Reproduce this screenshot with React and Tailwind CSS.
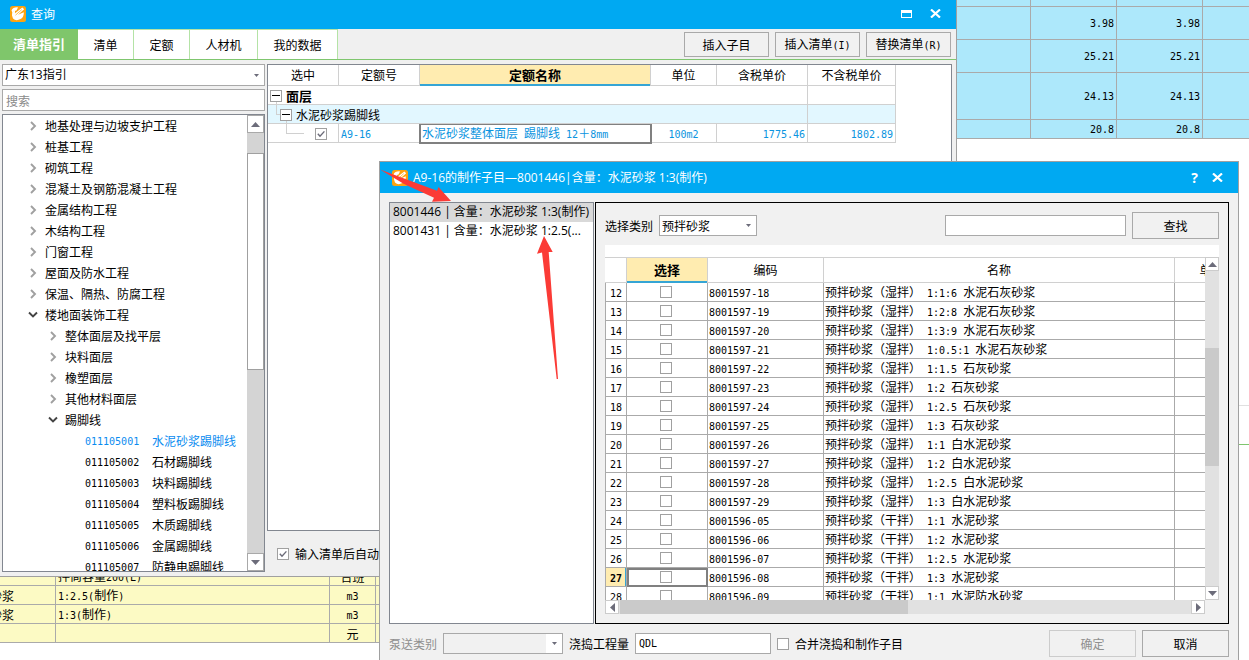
import { useState } from "react";

const priceRows = [
  { height: "h-[7px]", value: "" },
  { height: "h-[33px]", value: "3.98" },
  { height: "h-[33px]", value: "25.21" },
  { height: "h-[47px]", value: "24.13" },
  { height: "h-[19px]", value: "20.8" },
];

const materialRows = [
  { name: "", spec: "拌筒容量200(L)", unit: "台班" },
  { name: "水泥砂浆", spec: "1:2.5(制作)", unit: "m3" },
  { name: "水泥砂浆", spec: "1:3(制作)", unit: "m3" },
  { name: "", spec: "", unit: "元" },
];

const tabs = [
  { name: "清单指引", width: "w-[78px]" },
  { name: "清单", width: "w-14" },
  { name: "定额", width: "w-14" },
  { name: "人材机", width: "w-[68px]" },
  { name: "我的数据", width: "w-20" },
];

const treeItems = [
  { level: 0, name: "地基处理与边坡支护工程" },
  { level: 0, name: "桩基工程" },
  { level: 0, name: "砌筑工程" },
  { level: 0, name: "混凝土及钢筋混凝土工程" },
  { level: 0, name: "金属结构工程" },
  { level: 0, name: "木结构工程" },
  { level: 0, name: "门窗工程" },
  { level: 0, name: "屋面及防水工程" },
  { level: 0, name: "保温、隔热、防腐工程" },
  { level: 0, name: "楼地面装饰工程", open: true },
  { level: 1, name: "整体面层及找平层" },
  { level: 1, name: "块料面层" },
  { level: 1, name: "橡塑面层" },
  { level: 1, name: "其他材料面层" },
  { level: 1, name: "踢脚线", open: true },
  { level: 2, code: "011105001", name: "水泥砂浆踢脚线" },
  { level: 2, code: "011105002", name: "石材踢脚线" },
  { level: 2, code: "011105003", name: "块料踢脚线" },
  { level: 2, code: "011105004", name: "塑料板踢脚线" },
  { level: 2, code: "011105005", name: "木质踢脚线" },
  { level: 2, code: "011105006", name: "金属踢脚线" },
  { level: 2, code: "011105007", name: "防静电踢脚线" },
];

const mortarRows = [
  { no: 12, code: "8001597-18", name: "预拌砂浆（湿拌） 1:1:6 水泥石灰砂浆" },
  { no: 13, code: "8001597-19", name: "预拌砂浆（湿拌） 1:2:8 水泥石灰砂浆" },
  { no: 14, code: "8001597-20", name: "预拌砂浆（湿拌） 1:3:9 水泥石灰砂浆" },
  { no: 15, code: "8001597-21", name: "预拌砂浆（湿拌） 1:0.5:1 水泥石灰砂浆" },
  { no: 16, code: "8001597-22", name: "预拌砂浆（湿拌） 1:1.5 石灰砂浆" },
  { no: 17, code: "8001597-23", name: "预拌砂浆（湿拌） 1:2 石灰砂浆" },
  { no: 18, code: "8001597-24", name: "预拌砂浆（湿拌） 1:2.5 石灰砂浆" },
  { no: 19, code: "8001597-25", name: "预拌砂浆（湿拌） 1:3 石灰砂浆" },
  { no: 20, code: "8001597-26", name: "预拌砂浆（湿拌） 1:1 白水泥砂浆" },
  { no: 21, code: "8001597-27", name: "预拌砂浆（湿拌） 1:2 白水泥砂浆" },
  { no: 22, code: "8001597-28", name: "预拌砂浆（湿拌） 1:2.5 白水泥砂浆" },
  { no: 23, code: "8001597-29", name: "预拌砂浆（湿拌） 1:3 白水泥砂浆" },
  { no: 24, code: "8001596-05", name: "预拌砂浆（干拌） 1:1 水泥砂浆" },
  { no: 25, code: "8001596-06", name: "预拌砂浆（干拌） 1:2 水泥砂浆" },
  { no: 26, code: "8001596-07", name: "预拌砂浆（干拌） 1:2.5 水泥砂浆" },
  { no: 27, code: "8001596-08", name: "预拌砂浆（干拌） 1:3 水泥砂浆" },
  { no: 28, code: "8001596-09", name: "预拌砂浆（干拌） 1:1 水泥防水砂浆" },
];

// Latin runs are set in a half-width monospace next to full-width Chinese
const Mixed = ({ children }) =>
  String(children)
    .split(/([\x20-\x7e]+)/)
    .filter(Boolean)
    .map((part, i) =>
      /^[\x20-\x7e]/.test(part) ? (
        <span
          key={i}
          className="whitespace-pre font-['DejaVu_Sans_Mono',monospace] text-[10px]"
        >
          {part}
        </span>
      ) : (
        part
      )
    );

const Logo = () => (
  <svg className="h-4 w-4 shrink-0" viewBox="0 0 16 16">
    <rect width="16" height="16" rx="2.5" fill="#fca311" />
    <path d="M1.5 4.5Q3 1 8 1.4L6.5 4.5Q3.5 4.5 2.5 7Z" fill="#fff" />
    <path
      d="M2 9.5Q1.6 5.5 5 4.8L5 7.2L12.3 1.4L14.2 3.2L8 8.8L13.8 6.2Q14.2 11 10.5 13Q6 15.6 3 12.4Z"
      fill="#fff"
    />
    <path d="M5.5 9.2L11.8 3.6" stroke="#fca311" strokeWidth="0.7" />
  </svg>
);

const CloseIcon = () => (
  <svg className="h-[9px] w-[11px]" viewBox="0 0 11 9" fill="none">
    <path d="M1 0.5L10 8.5M10 0.5L1 8.5" stroke="#fff" strokeWidth="2.2" />
  </svg>
);

const Checkbox = ({ id, checked = false, label }) => {
  const [on, setOn] = useState(checked);
  return (
    <span className="relative inline-flex h-3 w-3 shrink-0">
      <input
        id={id}
        type="checkbox"
        aria-label={label}
        checked={on}
        onChange={() => setOn(!on)}
        className="h-3 w-3 appearance-none border border-[#a0a0a0] bg-white"
      />
      {on && (
        <svg
          className="pointer-events-none absolute inset-0 h-3 w-3"
          viewBox="0 0 12 12"
          fill="none"
        >
          <path d="M2.8 5.8L5 8.2L9.4 3.4" stroke="#6b6b78" strokeWidth="1.4" />
        </svg>
      )}
    </span>
  );
};

const Triangle = ({ dir, className = "" }) => {
  const points = {
    up: "0,5 4.5,0 9,5",
    down: "0,0 9,0 4.5,5",
    left: "5,0 5,9 0,4.5",
    right: "0,0 5,4.5 0,9",
  };
  const box = dir === "up" || dir === "down" ? "0 0 9 5" : "0 0 5 9";
  return (
    <svg className={className} viewBox={box} fill="#6c6c7a">
      <polygon points={points[dir]} />
    </svg>
  );
};

const Select = ({ id, value, label, disabled, className }) => (
  <span className={`relative flex border border-[#a9a9a9] ${className}`}>
    <select
      id={id}
      aria-label={label}
      disabled={disabled}
      defaultValue={value}
      className="w-full appearance-none bg-transparent px-[2px] text-xs leading-4 text-black outline-none"
    >
      <option>{value}</option>
    </select>
    <span
      className={`pointer-events-none absolute inset-y-0 right-0 flex w-4 items-center justify-center ${
        disabled ? "bg-white" : ""
      }`}
    >
      <Triangle dir="down" className="h-[3px] w-[5px]" />
    </span>
  </span>
);

const Button = ({ children, className = "", disabled }) => (
  <button
    disabled={disabled}
    className={`border border-[#a9a9a9] bg-[#f1f1f1] text-xs leading-4 text-black disabled:border-[#cccccc] disabled:text-[#8f8f8f] ${className}`}
  >
    <Mixed>{children}</Mixed>
  </button>
);

const TreeChevron = ({ open }) =>
  open ? (
    <svg className="h-2 w-3" viewBox="0 0 12 8" fill="none">
      <path d="M2 1.5L6 5.5L10 1.5" stroke="#444" strokeWidth="1.9" />
    </svg>
  ) : (
    <svg className="h-3 w-3" viewBox="0 0 12 12" fill="none">
      <path d="M4 2L8 6L4 10" stroke="#a0a0a0" strokeWidth="1.9" />
    </svg>
  );

const Expander = () => (
  <button
    aria-label="收起"
    className="relative z-10 flex h-3 w-3 items-center justify-center border border-[#a0a0a0] bg-white"
  >
    <span className="h-px w-2 bg-black" />
  </button>
);

const PriceTable = () => (
  <table className="w-full table-fixed border-separate border-spacing-0 bg-[#ade8fb] text-xs leading-[14px]">
    <colgroup>
      <col className="w-[74px]" />
      <col className="w-[86px]" />
      <col className="w-[86px]" />
      <col />
    </colgroup>
    <tbody>
      {priceRows.map((row, i) => (
        <tr key={i}>
          <td className={`${row.height} border-r border-b border-[#aaaaaa] p-0`} />
          <td className="border-r border-b border-[#aaaaaa] p-0 pr-[2px] text-right">
            <Mixed>{row.value}</Mixed>
          </td>
          <td className="border-r border-b border-[#aaaaaa] p-0 pr-[2px] text-right">
            <Mixed>{row.value}</Mixed>
          </td>
          <td className="border-b border-[#aaaaaa] p-0" />
        </tr>
      ))}
    </tbody>
  </table>
);

const MaterialTable = () => (
  <table className="w-full table-fixed border-separate border-spacing-0 bg-[#fcfac4] text-xs leading-[14px]">
    <colgroup>
      <col className="w-[92px]" />
      <col className="w-[274px]" />
      <col className="w-[46px]" />
      <col />
    </colgroup>
    <tbody className="[&_td]:h-[19px] [&_td]:border-b [&_td]:border-[#aaaaaa] [&_td]:p-0 [&_td]:pt-[2px]">
      {materialRows.map((row, i) => (
        <tr key={i}>
          <td className="border-r">
            <div className="pl-[2px]">{row.name}</div>
          </td>
          <td className="border-r">
            <div className="pl-[2px]">
              <Mixed>{row.spec}</Mixed>
            </div>
          </td>
          <td className="border-r text-center">
            <Mixed>{row.unit}</Mixed>
          </td>
          <td />
        </tr>
      ))}
    </tbody>
  </table>
);

const GuideTree = () => (
  <div className="flex min-h-0 flex-1 border border-[#828790] bg-white">
    <ul className="min-w-0 flex-1 overflow-hidden">
      {treeItems.map((item) => (
        <li
          key={item.name}
          className={`flex h-[21px] items-center whitespace-nowrap ${
            ["pl-6", "pl-11", "pl-[82px]"][item.level]
          } ${item.code === "011105001" ? "text-[#0a8cf0]" : ""}`}
        >
          {item.code ? (
            <span className="w-[67px]">
              <Mixed>{item.code}</Mixed>
            </span>
          ) : (
            <span className="mr-[6px] flex w-3 justify-center">
              <TreeChevron open={item.open} />
            </span>
          )}
          <span>{item.name}</span>
        </li>
      ))}
    </ul>
    <div className="flex w-[17px] flex-col bg-[#d4d4d4]">
      <div className="flex h-[18px] items-center justify-center border border-[#a9a9a9] bg-white">
        <Triangle dir="up" className="h-[5px] w-[9px]" />
      </div>
      <div className="mt-5 h-[217px] border border-[#a0a0a0] bg-white" />
      <div className="mt-auto flex h-[18px] items-center justify-center border border-[#a9a9a9] bg-white">
        <Triangle dir="down" className="h-[5px] w-[9px]" />
      </div>
    </div>
  </div>
);

const QuotaTable = () => (
  <table className="w-[628px] table-fixed border-separate border-spacing-0 text-xs leading-[14px]">
    <colgroup>
      <col className="w-[71px]" />
      <col className="w-[81px]" />
      <col className="w-[231px]" />
      <col className="w-[66px]" />
      <col className="w-[91px]" />
      <col className="w-[88px]" />
    </colgroup>
    <thead>
      <tr className="h-[21px] [&>th]:border-r [&>th]:border-b [&>th]:border-[#d0d0d0] [&>th]:p-0 [&>th]:font-normal">
        <th>选中</th>
        <th>定额号</th>
        <th className="bg-[#ffecb0]">
          <div className="-mb-px border-b-2 border-[#35a5d5] pt-px text-[13px] leading-[18px] font-bold">
            定额名称
          </div>
        </th>
        <th>单位</th>
        <th>含税单价</th>
        <th>不含税单价</th>
      </tr>
    </thead>
    <tbody className="[&_td]:h-[19px] [&_td]:border-r [&_td]:border-b [&_td]:border-[#d0d0d0] [&_td]:p-0 [&_td]:pt-px">
      <tr>
        <td colSpan={5}>
          <div className="flex items-center gap-1 pl-[2px] text-[13px] font-bold">
            <Expander />
            面层
          </div>
        </td>
        <td />
      </tr>
      <tr className="bg-[#e2f7ff]">
        <td colSpan={5} className="relative">
          <span className="absolute -top-1 left-2 h-[14px] w-1 border-b border-l border-[#d0d0d0]" />
          <div className="flex items-center gap-1 pl-3">
            <Expander />
            水泥砂浆踢脚线
          </div>
        </td>
        <td />
      </tr>
      <tr className="text-[#0a94e0]">
        <td className="relative">
          <span className="absolute -top-1 left-[18px] h-[14px] w-[18px] border-b border-l border-[#d0d0d0]" />
          <div className="flex pl-[47px]">
            <Checkbox checked label="A9-16" />
          </div>
        </td>
        <td>
          <div className="pl-[2px]">
            <Mixed>A9-16</Mixed>
          </div>
        </td>
        <td className="outline-2 -outline-offset-1 outline-[#808080]">
          <div className="pl-[2px] whitespace-nowrap">
            <Mixed>水泥砂浆整体面层 踢脚线 12＋8mm</Mixed>
          </div>
        </td>
        <td className="text-center">
          <Mixed>100m2</Mixed>
        </td>
        <td className="text-right">
          <div className="pr-[2px]">
            <Mixed>1775.46</Mixed>
          </div>
        </td>
        <td className="text-right">
          <div className="pr-[2px]">
            <Mixed>1802.89</Mixed>
          </div>
        </td>
      </tr>
    </tbody>
  </table>
);

const QueryWindow = () => {
  const [tab, setTab] = useState("清单指引");

  return (
    <section className="absolute inset-0 right-[292px] bottom-[83px] flex flex-col border-r border-b border-[#a0a0a0] bg-[#f0f0f0]">
      {/* Title bar */}
      <header className="flex h-[29px] shrink-0 items-center bg-[#00a9f2] pr-[15px] pb-[2px] pl-[10px] text-white">
        <Logo />
        <h1 className="ml-[5px] flex-1 text-xs">查询</h1>
        <button aria-label="最大化" className="mr-[18px]">
          <svg className="h-[8px] w-[11px]" viewBox="0 0 11 8">
            <path d="M0 0H11V8H0ZM1 3V7H10V3Z" fill="#fff" fillRule="evenodd" />
          </svg>
        </button>
        <button aria-label="关闭">
          <CloseIcon />
        </button>
      </header>

      {/* Tabs and actions */}
      <div className="flex h-[31px] shrink-0 items-stretch border-b border-[#7fc66e]">
        {tabs.map((t) => (
          <button
            key={t.name}
            onClick={() => setTab(t.name)}
            className={`${t.width} ${
              tab === t.name
                ? "bg-[#7fc66b] text-[13px] font-bold text-white"
                : "border-t border-r border-[#b4e3a6] bg-white text-xs"
            }`}
          >
            {t.name}
          </button>
        ))}
        <div className="ml-auto flex gap-[6px] pt-[3px] pr-[5px]">
          <Button className="h-[25px] w-[85px]">插入子目</Button>
          <Button className="h-[25px] w-[85px]">插入清单(I)</Button>
          <Button className="h-[25px] w-[85px]">替换清单(R)</Button>
        </div>
      </div>

      <div className="flex min-h-0 flex-1 gap-[2px] pt-1 pr-1 pl-[2px]">
        {/* Left: guide tree */}
        <div className="flex w-[263px] shrink-0 flex-col gap-[3px] pb-1 text-xs">
          <Select
            label="清单指引"
            value="广东13指引"
            className="h-[22px] bg-white font-['Open_Sans','Noto_Sans_CJK_SC',sans-serif]"
          />
          <input
            aria-label="搜索"
            placeholder="搜索"
            className="h-[22px] border border-[#a9a9a9] bg-white px-[3px] text-xs outline-none placeholder:text-[#8a8a8a]"
          />
          <GuideTree />
        </div>

        {/* Right: quota items */}
        <div className="flex min-w-0 flex-1 flex-col">
          <div className="min-h-0 flex-1 overflow-hidden border border-[#828790] bg-white">
            <QuotaTable />
          </div>
          <div className="flex h-[45px] items-center gap-[6px] pl-[10px] text-xs">
            <Checkbox id="auto" checked />
            <label htmlFor="auto">输入清单后自动关闭</label>
          </div>
        </div>
      </div>
    </section>
  );
};

const MortarTable = () => (
  <table className="w-[644px] table-fixed border-separate border-spacing-0 text-xs leading-[14px]">
    <colgroup>
      <col className="w-[22px]" />
      <col className="w-[81px]" />
      <col className="w-[116px]" />
      <col className="w-[351px]" />
      <col className="w-[74px]" />
    </colgroup>
    <thead>
      <tr className="h-[26px] [&>th]:border-y [&>th]:border-r [&>th]:border-[#d0d0d0] [&>th]:p-0 [&>th]:font-normal">
        <th />
        <th className="bg-[#ffecb0]">
          <div className="-mb-px border-b-2 border-[#35a5d5] text-[13px] leading-[23px] font-bold">
            选择
          </div>
        </th>
        <th>编码</th>
        <th>名称</th>
        <th>单位</th>
      </tr>
    </thead>
    <tbody className="[&_td]:h-[19px] [&_td]:border-r [&_td]:border-b [&_td]:border-[#aaaaaa] [&_td]:p-0 [&_td]:pt-[2px]">
      {mortarRows.map((row) => {
        const current = row.no === 27;
        return (
          <tr key={row.no}>
            <td
              className={
                current
                  ? "border-l border-l-[#d0d0d0] bg-[#ffecb0] text-center font-bold shadow-[inset_-1px_0_#35a5d5]"
                  : "border-l border-l-[#d0d0d0] text-center"
              }
            >
              <Mixed>{row.no}</Mixed>
            </td>
            <td className={current ? "outline-2 -outline-offset-2 outline-[#808080]" : ""}>
              <div className="flex justify-center pr-[2px] pb-[2px]">
                <Checkbox label={row.code} />
              </div>
            </td>
            <td>
              <div className="pl-px">
                <Mixed>{row.code}</Mixed>
              </div>
            </td>
            <td>
              <div className="pl-px whitespace-nowrap">
                <Mixed>{row.name}</Mixed>
              </div>
            </td>
            <td />
          </tr>
        );
      })}
    </tbody>
  </table>
);

const MortarDialog = () => (
  <section className="absolute top-[161px] right-[10px] bottom-0 left-[379px] flex flex-col border border-b-0 border-[#a0a0a0] bg-[#f1f1f1] text-xs">
    {/* Title bar */}
    <header className="flex h-[31px] shrink-0 items-center bg-[#00a9f2] pr-[15px] pl-3 text-white">
      <Logo />
      <h2 className="ml-[5px] flex-1 font-['Open_Sans','Noto_Sans_CJK_SC',sans-serif] whitespace-nowrap">
        A9-16的制作子目—8001446|含量：水泥砂浆 1:3(制作)
      </h2>
      <button aria-label="帮助" className="mr-[14px] font-['Open_Sans',sans-serif] text-sm font-bold">
        ?
      </button>
      <button aria-label="关闭">
        <CloseIcon />
      </button>
    </header>

    <div className="flex min-h-0 flex-1 gap-px pt-[9px] pr-[9px] pl-[9px]">
      {/* Sub item list */}
      <ul className="w-[205px] shrink-0 border border-[#828790] bg-white font-['Open_Sans','Noto_Sans_CJK_SC',sans-serif] leading-[18px]">
        <li className="h-[19px] overflow-hidden bg-[#d9d9d9] pl-[3px] whitespace-nowrap">
          8001446 | 含量：水泥砂浆 1:3(制作)
        </li>
        <li className="h-[19px] overflow-hidden pl-[3px] whitespace-nowrap">
          8001431 | 含量：水泥砂浆 1:2.5(...
        </li>
      </ul>

      {/* Material picker */}
      <div className="flex min-w-0 flex-1 flex-col border border-black p-[9px]">
        <div className="flex items-center">
          <label htmlFor="category" className="mr-[6px]">
            选择类别
          </label>
          <Select id="category" value="预拌砂浆" className="h-[21px] w-[98px] bg-white" />
          <input
            aria-label="查找内容"
            className="ml-auto h-[21px] w-[181px] border border-[#a9a9a9] bg-white px-1 outline-none"
          />
          <Button className="ml-[6px] h-[27px] w-[87px]">查找</Button>
        </div>

        <div className="mt-[6px] flex min-h-0 flex-1 flex-col">
          <div className="h-3 shrink-0 bg-white" />
          <div className="flex min-h-0 flex-1">
            <div className="min-w-0 flex-1 overflow-hidden bg-white">
              <MortarTable />
            </div>
            <div className="flex w-[14px] flex-col bg-[#e1e1e1]">
              <div className="flex h-[14px] items-center justify-center border border-[#cccccc] bg-white">
                <Triangle dir="up" className="h-[5px] w-[9px]" />
              </div>
              <div className="mt-[77px] h-[118px] bg-[#cacaca]" />
              <div className="mt-auto flex h-[14px] items-center justify-center border border-[#cccccc] bg-white">
                <Triangle dir="down" className="h-[5px] w-[9px]" />
              </div>
            </div>
          </div>
          <div className="mr-[14px] flex h-[14px] shrink-0 bg-[#e1e1e1]">
            <div className="flex w-[14px] items-center justify-center border border-[#cccccc] bg-white">
              <Triangle dir="left" className="h-[9px] w-[5px]" />
            </div>
            <div className="ml-px w-72 bg-[#cacaca]" />
            <div className="ml-auto flex w-[14px] items-center justify-center border border-[#cccccc] bg-white">
              <Triangle dir="right" className="h-[9px] w-[5px]" />
            </div>
          </div>
        </div>
      </div>
    </div>

    {/* Footer */}
    <footer className="flex shrink-0 items-center pt-[6px] pr-[9px] pb-[3px] pl-[9px] whitespace-nowrap">
      <label htmlFor="pump" className="mr-[6px] text-[#8f8f8f]">
        泵送类别
      </label>
      <Select id="pump" value="" disabled className="h-[21px] w-[120px]" />
      <label htmlFor="amount" className="mr-[6px] ml-[6px]">
        浇捣工程量
      </label>
      <input
        id="amount"
        defaultValue="QDL"
        className="h-[21px] w-[136px] border border-[#a9a9a9] bg-white px-[3px] font-['DejaVu_Sans_Mono',monospace] text-[10px] outline-none"
      />
      <span className="ml-[6px] flex items-center gap-[6px]">
        <Checkbox id="merge" />
        <label htmlFor="merge">合并浇捣和制作子目</label>
      </span>
      <Button disabled className="ml-auto h-[27px] w-[87px]">
        确定
      </Button>
      <Button className="ml-[6px] h-[27px] w-[87px]">取消</Button>
    </footer>
  </section>
);

const App = () => {
  return (
    <main className="relative h-screen overflow-hidden bg-white font-['Noto_Sans_CJK_SC',sans-serif] text-black">
      {/* Sheets behind the windows */}
      <div className="absolute top-0 right-0 w-[292px]">
        <PriceTable />
      </div>
      <div className="absolute bottom-[17px] -left-9 w-[500px]">
        <MaterialTable />
      </div>
      <div className="absolute top-[405px] right-0 h-10 w-[10px] border-t border-b border-t-[#e0e0e0] border-b-[#7fc66e]" />

      <QueryWindow />
      <MortarDialog />

      {/* Pointer arrows */}
      <svg
        className="pointer-events-none absolute top-[168px] left-[380px] h-[212px] w-[180px]"
        viewBox="380 168 180 212"
        fill="#fb3b36"
      >
        <polygon points="380,169.5 437,190.7 438.5,187 451,201 432,201.8 434,197.7 404,184" />
        <polygon points="544,236 552.7,252 548.7,252 558,379 556.7,379 542,252.5 537,253.7" />
      </svg>
    </main>
  );
};

export default App;
